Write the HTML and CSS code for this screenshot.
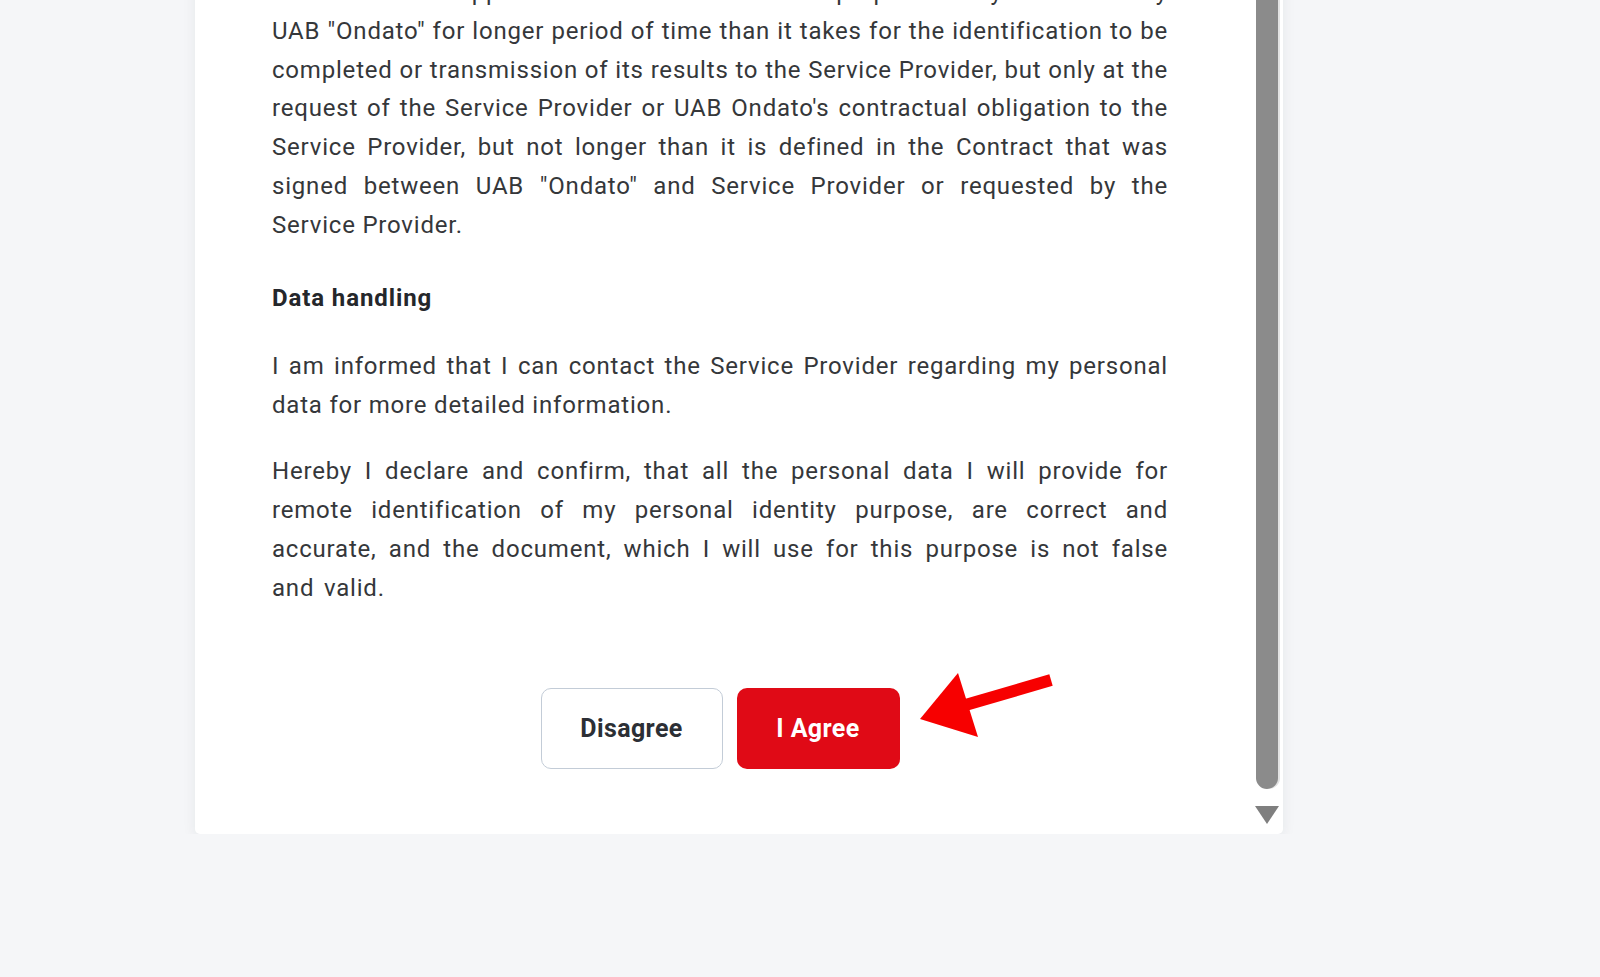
FILE: index.html
```html
<!DOCTYPE html>
<html lang="en">
<head>
    <meta charset="UTF-8">
    <meta name="viewport" content="width=device-width, initial-scale=1.0">
    <title>Consent</title>
    <link rel="stylesheet" href="styles.css">
</head>
<body>
    <div class="card">
        <div class="content">
            <p class="first">Results of the Applicant identification and its purposes may be stored by UAB&nbsp;"Ondato" for longer period of time than it takes for the identification to be completed or transmission of its results to the Service Provider, but only at the request of the Service Provider or UAB Ondato's contractual obligation to the Service Provider, but not longer than it is defined in the Contract that was signed between UAB "Ondato" and Service Provider or requested by the Service Provider.</p>

            <h4>Data handling</h4>

            <p>I am informed that I can contact the Service Provider regarding my personal data for more detailed information.</p>

            <p class="declaration">Hereby I declare and confirm, that all the personal data I will provide for remote identification of my personal identity purpose, are correct and accurate, and the document, which I will use for this purpose is not false and valid.</p>

            <div class="actions">
                <button class="btn btn-outline">Disagree</button>
                <button class="btn btn-primary">I Agree</button>
            </div>
        </div>

        <div class="scrollbar">
            <div class="thumb"></div>
            <div class="scroll-arrow"></div>
        </div>
    </div>

    <!-- annotation arrow -->
    <svg class="pointer" width="150" height="90" viewBox="0 0 150 90">
        <line x1="141" y1="20" x2="52" y2="46" stroke="#f70000" stroke-width="12"/>
        <polygon points="10,59 48,13 68,77" fill="#f70000"/>
    </svg>
</body>
</html>
```

FILE: styles.css
```css
body {
    margin: 0;
    background: #f5f6f8;
    font-family: Roboto, "Liberation Sans", sans-serif;
    color: #35373a;
}
.card {
    display: flex;
    width: 1088px;
    margin-left: 195px;
    margin-top: -27px;
    background: #fff;
    border-radius: 0 0 5px 5px;
    box-shadow: 0 4px 14px rgba(30, 40, 60, 0.07);
}
.content {
    width: 896px;
    padding-left: 77px;
    padding-bottom: 65px;
}
.content p {
    margin: 27.5px 0;
    font-size: 24px;
    line-height: 38.8px;
    letter-spacing: 0.8px;
    text-align: justify;
}
.content p.first {
    margin-top: 0;
}
.content p.declaration {
    word-spacing: 3px;
}
.content h4 {
    margin: 34px 0 30px;
    font-size: 24px;
    line-height: 38.8px;
    letter-spacing: 0.9px;
    font-weight: 700;
    color: #25272b;
}
.actions {
    display: flex;
    justify-content: center;
    gap: 14px;
    margin-top: 80px;
}
.btn {
    height: 81px;
    border-radius: 10px;
    font-family: Roboto, "Liberation Sans", sans-serif;
    font-size: 25px;
    font-weight: 700;
    letter-spacing: 0.4px;
    cursor: pointer;
}
.btn-outline {
    width: 182px;
    background: #fff;
    border: 1.5px solid #c3ccd7;
    color: #2c2f35;
}
.btn-primary {
    width: 163px;
    background: #e00a16;
    border: none;
    color: #fff;
}
.scrollbar {
    display: flex;
    flex-direction: column;
    align-items: center;
    width: 32px;
    margin-left: 83px;
    padding-bottom: 10px;
}
.thumb {
    flex: 1;
    width: 22px;
    background: #8b8b8b;
    border-radius: 0 0 11px 11px;
    box-shadow: 2px 0 0 #e2e2e2;
}
.scroll-arrow {
    width: 0;
    height: 0;
    margin-top: 17px;
    border-left: 12px solid transparent;
    border-right: 12px solid transparent;
    border-top: 18px solid #7f7f7f;
}
.pointer {
    position: absolute;
    left: 910px;
    top: 660px;
}
```
